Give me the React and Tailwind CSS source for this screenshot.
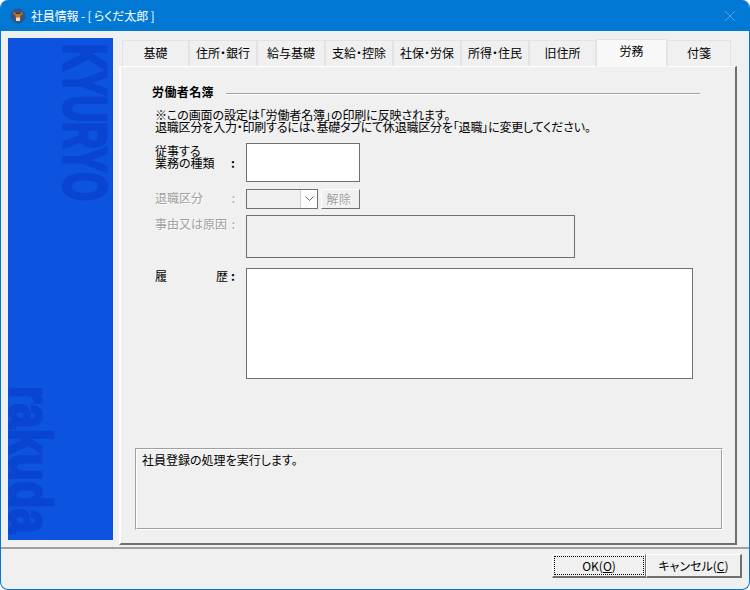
const tabs = [
  { label: "基礎", w: "w-[67px]" },
  { label: "住所・銀行", w: "w-[68px]" },
  { label: "給与基礎", w: "w-[68px]" },
  { label: "支給・控除", w: "w-[68px]" },
  { label: "社保・労保", w: "w-[68px]" },
  { label: "所得・住民", w: "w-[68px]" },
  { label: "旧住所", w: "w-[67px]" },
  { label: "労務", w: "w-[71px]", active: true },
  { label: "付箋", w: "w-[64px]" },
];

const font = "font-['Noto_Sans_CJK_JP','Liberation_Sans',sans-serif] [font-feature-settings:'palt']";

function TitleIcon() {
  return (
    <svg width="16" height="16" viewBox="0 0 16 16" className="shrink-0">
      <circle cx="8" cy="8" r="7.5" fill="#33548a" />
      <path d="M3 3.5 L5.5 5 L10.5 5 L13 3.5 L12 6.5 L10.5 7.5 L10 12.5 L6 12.5 L5.5 7.5 L4 6.5 Z" fill="#c8741a" />
      <path d="M6 9.5 H10 V13 H6 Z" fill="#efe0c0" />
      <path d="M5.5 5 H10.5 V6 H5.5 Z" fill="#5a2c10" />
    </svg>
  );
}

export default function App() {
  return (
    <div className={`w-[750px] h-[590px] bg-white ${font}`}>
      <div className="w-full h-full flex flex-col rounded-t-lg rounded-b-lg overflow-hidden border border-[#0078d4] border-t-0 bg-[#f0f0f0] text-[12px] leading-[12px] text-black">
        {/* title bar */}
        <div className="h-[31px] shrink-0 bg-[#0078d4] flex items-center pl-[9px] pr-[12px]">
          <TitleIcon />
          <span className="pl-[5px] text-white text-[12px] tracking-[-0.15px]">社員情報 - [ らくだ太郎 ]</span>
          <svg width="12" height="12" viewBox="0 0 12 12" className="ml-auto mr-[1px]">
            <path d="M1 1 L11 11 M11 1 L1 11" stroke="#5aa5e0" strokeWidth="1" />
          </svg>
        </div>

        <div className="flex-1 flex pt-[7px] pl-[7px] pr-[11px]">
          {/* side banner */}
          <div className="relative w-[105px] h-[502px] shrink-0 bg-[#0c54e0] font-['Liberation_Sans',sans-serif]">
            <span className="absolute left-[63px] top-[4px] w-[27px] h-[160px] flex items-center justify-center [writing-mode:vertical-rl] scale-x-[1.67] text-[37px] leading-[27px] font-bold text-[#0a45d2] [-webkit-text-stroke:2px_#0a45d2]">KYURYO</span>
            <span className="absolute left-[6px] top-[347px] w-[33px] h-[150px] flex items-center justify-center [writing-mode:vertical-rl] scale-x-[1.33] text-[45px] leading-[33px] font-bold text-[#0a45d2] [-webkit-text-stroke:2px_#0a45d2]">rakuda</span>
          </div>

          <div className="ml-[6px] flex-1 flex flex-col">
            {/* tabs */}
            <div className="h-[28px] flex items-end pl-[3px] shrink-0">
              {tabs.map((t) =>
                t.active ? (
                  <div key={t.label} className={`${t.w} h-[28px] mb-[-1px] relative z-10 pb-[5px] bg-[#f8f8f8] border border-b-0 border-[#e3e3e3] flex items-center justify-center`}>
                    {t.label}
                  </div>
                ) : (
                  <div key={t.label} className={`${t.w} h-[26px] pb-[2px] bg-[#f0f0f0] border border-b-0 border-[#e3e3e3] flex items-center justify-center`}>
                    {t.label}
                  </div>
                )
              )}
            </div>

            {/* tab page */}
            <div className="w-[618px] h-[479px] bg-[#f0f0f0] border-l-2 border-t border-white border-r-2 border-b-2 border-r-[#6e6e6e] border-b-[#6e6e6e] pl-[14px] flex flex-col">
              <div className="flex items-center h-[12px] mt-[19px] ml-[17px]">
                <b className="font-bold tracking-[0.4px] whitespace-nowrap">労働者名簿</b>
                <div className="ml-[12px] mt-[4px] w-[474px] h-[2px] border-t border-[#a0a0a0] border-b-white border-b" />
              </div>

              <div className="mt-[11px] ml-[20px] whitespace-nowrap tracking-[-0.1px]">※この画面の設定は「労働者名簿」の印刷に反映されます。</div>
              <div className="ml-[20px] whitespace-nowrap tracking-[-0.19px]">退職区分を入力・印刷するには、基礎タブにて休退職区分を「退職」に変更してください。</div>

              <div className="flex mt-[10px] ml-[20px]">
                <div className="w-[91px] pt-[2px] leading-[12px] relative">
                  <div>従事する</div>
                  <div className="flex justify-between pr-[11px]"><span>業務の種類</span><b>:</b></div>
                </div>
                <div className="w-[114px] h-[39px] bg-white border border-[#707070]" />
              </div>

              <div className="flex mt-[7px] ml-[20px] items-center h-[20px]">
                <div className="w-[91px] pb-[2px] flex justify-between pr-[11px] text-[#a0a0a0] [text-shadow:1px_1px_0_#fff]"><span>退職区分</span><span>:</span></div>
                <div className="w-[72px] h-[20px] border border-[#707070] bg-[#f0f0f0] flex justify-end">
                  <div className="w-[17px] h-full bg-white border-l border-[#d0d0d0] flex items-center justify-center">
                    <svg width="9" height="6" viewBox="0 0 9 6"><path d="M0.5 0.5 L4.5 4.5 L8.5 0.5" fill="none" stroke="#606060" /></svg>
                  </div>
                </div>
                <div className="ml-[3px] w-[39px] h-[20px] pr-[3px] pb-[1px] bg-[#f0f0f0] border border-white border-r-[#707070] border-b-[#707070] flex items-center justify-center text-[#a0a0a0] tracking-[0.4px] [text-shadow:1px_1px_0_#fff]">解除</div>
              </div>

              <div className="flex mt-[6px] ml-[20px]">
                <div className="w-[91px] pt-[3px] flex justify-between pr-[11px] text-[#a0a0a0] [text-shadow:1px_1px_0_#fff]"><span>事由又は原因</span><span>:</span></div>
                <div className="w-[329px] h-[43px] bg-[#f0f0f0] border border-[#707070]" />
              </div>

              <div className="flex mt-[10px] ml-[20px]">
                <div className="w-[91px] pt-[2px] flex justify-between pr-[11px]"><span className="flex-1 flex justify-between pr-[3px]"><span>履</span><span>歴</span></span><b>:</b></div>
                <div className="w-[447px] h-[111px] bg-white border border-[#707070]" />
              </div>

              {/* message box */}
              <div className="mt-[69px] w-[588px] h-[82px] border border-[#a0a0a0] border-r-white border-b-white">
                <div className="w-full h-full border border-white border-r-[#a0a0a0] border-b-[#a0a0a0] px-[5px] pt-[4px]">
                  社員登録の処理を実行します。
                </div>
              </div>
            </div>
          </div>
        </div>

        {/* footer */}
        <div className="h-[42px] shrink-0 border-t-2 border-t-[#a0a0a0] flex justify-end items-start pt-[5px] pr-[7px]">
          <div className="w-[94px] h-[24px] bg-[#f0f0f0] border border-white border-r-[#707070] border-b-2 border-b-[#707070] p-[1px]">
            <div className="w-full h-full border border-dotted border-black flex items-center justify-center">
              <span>OK(<u>O</u>)</span>
            </div>
          </div>
          <div className="w-[96px] h-[24px] bg-[#f0f0f0] border border-white border-r-2 border-r-[#707070] border-b-2 border-b-[#707070] flex items-center justify-center">
            <span>キャンセル(<u>C</u>)</span>
          </div>
        </div>
      </div>
    </div>
  );
}
